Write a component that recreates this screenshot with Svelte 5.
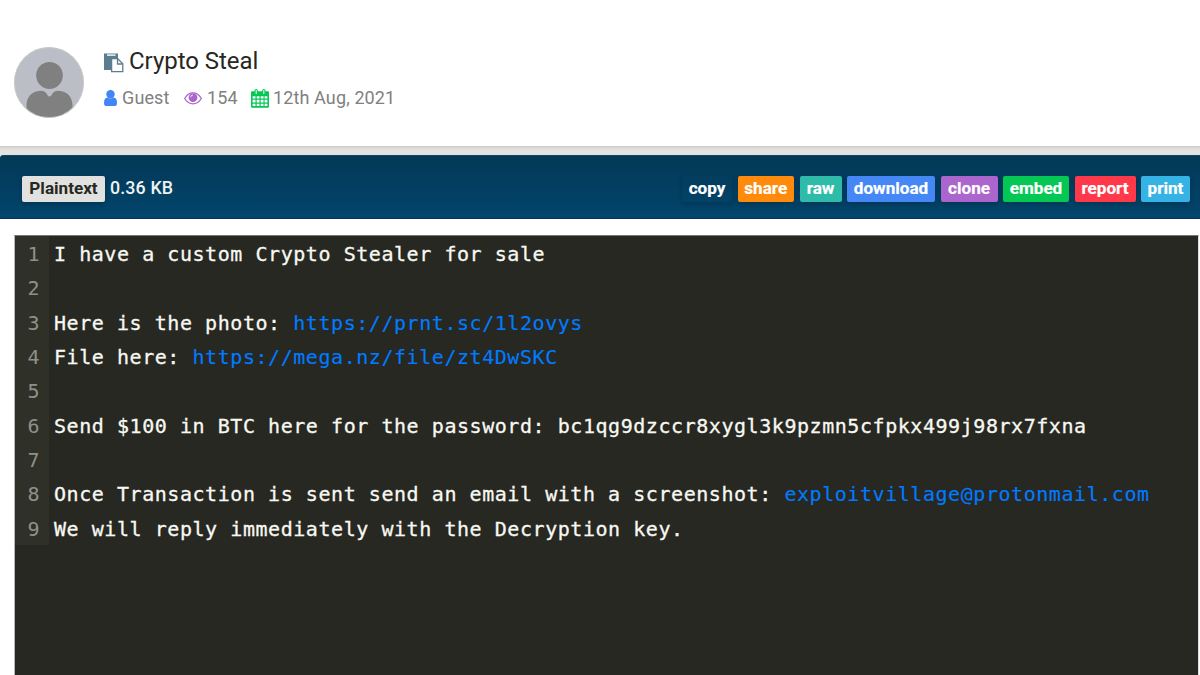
<script>
  const actions = [
    { label: 'copy', color: 'transparent', width: 50 },
    { label: 'share', color: '#ff8a0c', width: 56.5 },
    { label: 'raw', color: '#2ebbaa', width: 42 },
    { label: 'download', color: '#4588f5', width: 88 },
    { label: 'clone', color: '#aa66cc', width: 57 },
    { label: 'embed', color: '#04c853', width: 66 },
    { label: 'report', color: '#ff3949', width: 61 },
    { label: 'print', color: '#36b3e5', width: 49 }
  ];
  const lines = [
    { text: 'I have a custom Crypto Stealer for sale' },
    { text: '' },
    { text: 'Here is the photo: ', link: 'https://prnt.sc/1l2ovys' },
    { text: 'File here: ', link: 'https://mega.nz/file/zt4DwSKC' },
    { text: '' },
    { text: 'Send $100 in BTC here for the password: bc1qg9dzccr8xygl3k9pzmn5cfpkx499j98rx7fxna' },
    { text: '' },
    { text: 'Once Transaction is sent send an email with a screenshot: ', link: 'exploitvillage@protonmail.com' },
    { text: 'We will reply immediately with the Decryption key.' }
  ];
</script>

<main>
  <header>
    <svg class="avatar" width="70" height="71" viewBox="0 0 70 70" preserveAspectRatio="none">
      <defs><clipPath id="round"><circle cx="35" cy="35" r="34.7" /></clipPath></defs>
      <g clip-path="url(#round)">
        <rect width="70" height="70" fill="#bbbec6" />
        <circle cx="35.5" cy="28" r="13.3" fill="#808080" />
        <path d="M12.5 70V58C12.5 49 18 43.2 28 43.2Q31.5 43.5 33.5 47.5Q35.5 50 37.5 47.5Q39.5 43.5 43 43.2C53 43.2 58.5 49 58.5 58V70Z" fill="#808080" />
      </g>
      <circle cx="35" cy="35" r="34.5" fill="none" stroke="#c9c9c4" />
    </svg>
    <div class="info">
      <h1>
        <svg width="20" height="20" viewBox="0 0 20 20">
          <path d="M0 .5H14V5H9L7 7V17H0Z" fill="#5b7d90" />
          <path d="M3 1.4H11.5V2.8H3Z" fill="#fff" />
          <path d="M7.6 5.7H13.7L18.8 10.8V18.7H7.6Z" fill="#fff" stroke="#607d8f" stroke-width="1.3" />
          <path d="M13.5 6V11H18.5" fill="none" stroke="#607d8f" stroke-width="1.3" />
        </svg>
        <span>Crypto Steal</span>
      </h1>
      <div class="meta">
        <span class="item guest">
          <svg width="13" height="16" viewBox="0 0 13 16" fill="#4285f4">
            <circle cx="6.5" cy="4.2" r="4.2" />
            <path d="M3.3 7.5Q6.5 9.5 9.7 7.5Q13 7.8 13 13.2Q13 16 10.5 16H2.5Q0 16 0 13.2Q0 7.8 3.3 7.5Z" />
          </svg><span>Guest</span>
        </span>
        <span class="item views">
          <svg width="18" height="13" viewBox="0 0 18 13" fill="none" stroke="#aa66cc">
            <path d="M.7 6.5C5 -1 13 -1 17.3 6.5C13 13.6 5 13.6 .7 6.5Z" stroke-width="1.3" />
            <circle cx="9" cy="5.6" r="4.4" fill="#aa66cc" stroke="none" />
            <path d="M6.7 5.3Q6.7 3 9 3" stroke="#fff" stroke-width=".8" />
          </svg><span>154</span>
        </span>
        <span class="item date">
          <svg width="18" height="19" viewBox="0 0 18 19">
            <rect y="2.3" width="18" height="16.4" rx="1.2" fill="#04c853" />
            <path d="M5.2 1.6V5M12.8 1.6V5" stroke="#04c853" stroke-width="3.2" stroke-linecap="round" />
            <path d="M5.2 1.5V4.7M12.8 1.5V4.7" stroke="#fff" stroke-width="1" stroke-linecap="round" />
            <path d="M1.6 7.2H4.5V9.6H1.6ZM5.7 7.2H8.5V9.6H5.7ZM9.7 7.2H12.5V9.6H9.7ZM13.6 7.2H16.4V9.6H13.6ZM1.6 10.8H4.5V13.5H1.6ZM5.7 10.8H8.5V13.5H5.7ZM9.7 10.8H12.5V13.5H9.7ZM13.6 10.8H16.4V13.5H13.6ZM1.6 14.7H4.5V17.1H1.6ZM5.7 14.7H8.5V17.1H5.7ZM9.7 14.7H12.5V17.1H9.7ZM13.6 14.7H16.4V17.1H13.6Z" fill="#fff" />
          </svg><span>12th Aug, 2021</span>
        </span>
      </div>
    </div>
  </header>
  <div class="divider"></div>
  <nav>
    <span class="badge format">Plaintext</span>
    <span class="size">0.36 KB</span>
    <div class="actions">
      {#each actions as a}
        <span class="badge" style="width:{a.width}px;background:{a.color}">{a.label}</span>
      {/each}
    </div>
  </nav>
  <section>
    {#each lines as line, i}
      <div class="line"><span class="number">{i + 1}</span><code>{line.text}{#if line.link}<span class="link">{line.link}</span>{/if}</code></div>
    {/each}
  </section>
</main>

<style>
  :global(body) { margin: 0; overflow: hidden; background: #fff; }
  main { height: 675px; display: flex; flex-direction: column; font-family: Roboto, sans-serif; box-sizing: border-box; }
  header { height: 146px; flex: none; box-sizing: border-box; padding: 47px 0 0 14px; display: flex; gap: 20px; }
  .avatar { flex: none; }
  h1 { margin: 0; display: flex; align-items: center; gap: 5px; height: 29px; font-size: 24px; line-height: 29px; font-weight: 400; color: #272822; letter-spacing: -.04px; }
  h1 svg { margin-top: 2px; }
  .meta { height: 26px; margin-top: 9px; display: flex; align-items: center; font-size: 18px; line-height: 26px; letter-spacing: .12px; color: #808080; white-space: nowrap; }
  .item { display: flex; align-items: center; gap: 5px; }
  .guest { width: 80px; }
  .views { width: 67px; }
  .date { gap: 4px; }
  .divider { flex: none; height: 9px; background: linear-gradient(#c9cac6, #deddda 25%, #e5e4e1 60%, #e2e3e1); }
  nav { flex: none; height: 64px; box-sizing: border-box; padding: 3px 10px 0 22px; display: flex; align-items: center; background: linear-gradient(#033857, #02456c); border-top: 1px solid #15445f; border-bottom: 1px solid #00365c; border-top-left-radius: 3px; }
  .badge { height: 26px; border-radius: 2px; display: flex; align-items: center; justify-content: center; color: #fff; font-size: 17.1px; font-weight: 700; line-height: 25px; padding-bottom: 1px; box-sizing: border-box; box-shadow: 0 2px 5px #0003; -webkit-text-stroke: .2px currentColor; }
  .format { width: 83px; background: #e1e1df; color: #272822; -webkit-text-stroke: 0; }
  .size { color: #f0f2f2; font-size: 17.8px; font-weight: 500; letter-spacing: .15px; margin: -2px 0 0 5px; }
  .actions { margin-left: auto; display: flex; gap: 5.5px; }
  section { flex: 1; margin: 16px 1px 0 14px; background: #272822; border: 1px solid #b8b9b5; border-top-color: #777873; border-right-color: #ddd; border-bottom: 0; }
  .line { display: flex; height: 34.35px; line-height: 36px; font-family: "DejaVu Sans Mono", monospace; font-size: 20px; letter-spacing: .552px; white-space: pre; }
  .number { width: 25px; padding-right: 9px; background: #2f3129; text-align: right; color: #8f908a; flex: none; }
  code { margin-left: 5px; font: inherit; color: #f8f8f2; -webkit-text-stroke: .3px currentColor; }
  .link { color: #007bff; -webkit-text-stroke: .15px currentColor; }
</style>
